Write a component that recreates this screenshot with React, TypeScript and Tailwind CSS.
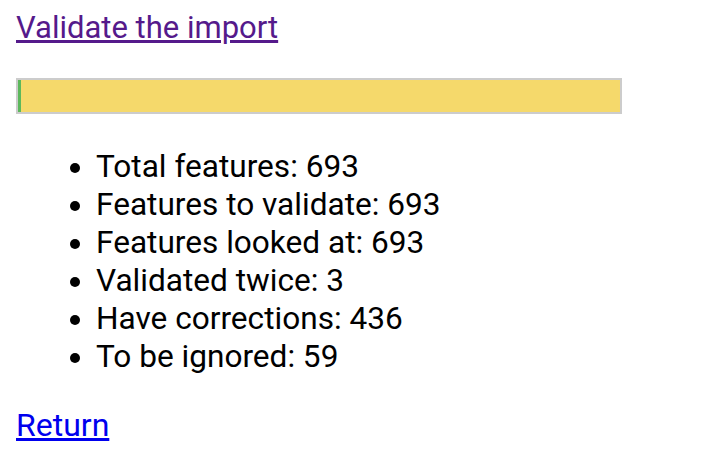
import React from "react";

const items = [
  "Total features: 693",
  "Features to validate: 693",
  "Features looked at: 693",
  "Validated twice: 3",
  "Have corrections: 436",
  "To be ignored: 59",
];

export default function App() {
  return (
    <div
      className="min-h-[476px] w-[720px] bg-white px-4 pt-[9px] text-[32px] leading-[37.5px] text-black"
      style={{ fontFamily: "Roboto, 'Liberation Sans', sans-serif" }}
    >
      <div className="text-[31px]">
        <a href="#" className="text-[#551a8b] underline">
          Validate the import
        </a>
      </div>
      <div className="mt-[31px] flex h-[36px] w-[606px] border-2 border-[#cccccc] bg-[#f5f5f5]">
        <div className="w-[3px] bg-[#5cb85c]" />
        <div className="flex-1 bg-[#f5d96b]" />
      </div>
      <ul className="mt-[34px] list-disc pl-[80px] text-[31.6px] leading-[38px]">
        {items.map((t) => (
          <li key={t}>{t}</li>
        ))}
      </ul>
      <div className="mt-[31px]">
        <a href="#" className="text-[#0000ee] underline">
          Return
        </a>
      </div>
    </div>
  );
}
